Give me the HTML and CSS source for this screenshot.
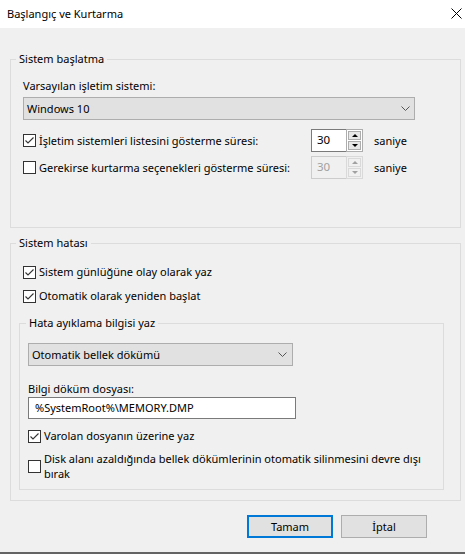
FILE: index.html
```html
<!DOCTYPE html>
<html lang="tr">
<head>
<meta charset="utf-8">
<title>Başlangıç ve Kurtarma</title>
<link rel="stylesheet" href="styles.css">
</head>
<body>
<div class="window">
  <div class="titlebar">
    <span class="title">Başlangıç ve Kurtarma</span>
    <svg class="close" width="11" height="11" viewBox="0 0 11 11"><path d="M0.5 0.5 L10.5 10.5 M10.5 0.5 L0.5 10.5" stroke="#000" stroke-width="1" fill="none"/></svg>
  </div>
  <div class="content">
    <fieldset class="group g1">
      <legend>Sistem başlatma</legend>
      <div class="label first">Varsayılan işletim sistemi:</div>
      <div class="select os"><span>Windows 10</span><svg class="chev" width="9" height="5" viewBox="0 0 9 5"><path d="M0.5 0.5 L4.5 4.5 L8.5 0.5" stroke="#555" stroke-width="1" fill="none"/></svg></div>
      <div class="spin-row r1">
        <div class="check grow"><span class="box"><svg width="11" height="11" viewBox="0 0 11 11"><path d="M1.5 5.5 L4 8 L9.5 2.5" stroke="#333" stroke-width="1.1" fill="none"/></svg></span><span>İşletim sistemleri listesini gösterme süresi:</span></div>
        <div class="spin">
          <div class="spin-field">30</div>
          <div class="spin-btns"><span class="spin-btn"><i class="tri up"></i></span><span class="spin-btn"><i class="tri down"></i></span></div>
        </div>
        <span class="unit">saniye</span>
      </div>
      <div class="spin-row r2">
        <div class="check grow"><span class="box"></span><span>Gerekirse kurtarma seçenekleri gösterme süresi:</span></div>
        <div class="spin disabled">
          <div class="spin-field">30</div>
          <div class="spin-btns"><span class="spin-btn"><i class="tri up"></i></span><span class="spin-btn"><i class="tri down"></i></span></div>
        </div>
        <span class="unit">saniye</span>
      </div>
    </fieldset>

    <fieldset class="group g2">
      <legend>Sistem hatası</legend>
      <div class="check c1"><span class="box"><svg width="11" height="11" viewBox="0 0 11 11"><path d="M1.5 5.5 L4 8 L9.5 2.5" stroke="#333" stroke-width="1.1" fill="none"/></svg></span><span>Sistem günlüğüne olay olarak yaz</span></div>
      <div class="check c2"><span class="box"><svg width="11" height="11" viewBox="0 0 11 11"><path d="M1.5 5.5 L4 8 L9.5 2.5" stroke="#333" stroke-width="1.1" fill="none"/></svg></span><span>Otomatik olarak yeniden başlat</span></div>

      <fieldset class="group inner">
        <legend>Hata ayıklama bilgisi yaz</legend>
        <div class="select dump"><span>Otomatik bellek dökümü</span><svg class="chev" width="9" height="5" viewBox="0 0 9 5"><path d="M0.5 0.5 L4.5 4.5 L8.5 0.5" stroke="#555" stroke-width="1" fill="none"/></svg></div>
        <div class="label file-label">Bilgi döküm dosyası:</div>
        <div class="textbox">%SystemRoot%\MEMORY.DMP</div>
        <div class="check c3"><span class="box"><svg width="11" height="11" viewBox="0 0 11 11"><path d="M1.5 5.5 L4 8 L9.5 2.5" stroke="#333" stroke-width="1.1" fill="none"/></svg></span><span>Varolan dosyanın üzerine yaz</span></div>
        <div class="check c4 multi"><span class="box"></span><span>Disk alanı azaldığında bellek dökümlerinin otomatik silinmesini devre dışı bırak</span></div>
      </fieldset>
    </fieldset>

    <div class="buttons">
      <button class="btn default">Tamam</button>
      <button class="btn">İptal</button>
    </div>
  </div>
</div>
</body>
</html>
```

FILE: styles.css
```css
html, body {
  margin: 0;
  padding: 0;
}
body {
  width: 465px;
  height: 554px;
  font-family: "Noto Sans", "Open Sans", sans-serif;
  font-size: 11px;
  color: #000;
  background: #f0f0f0;
  overflow: hidden;
}
.window {
  height: 554px;
  box-sizing: border-box;
  border-bottom: 2px solid #646464;
  display: flex;
  flex-direction: column;
}
.titlebar {
  height: 28px;
  flex: none;
  background: #fff;
  display: flex;
  align-items: center;
  justify-content: space-between;
  padding: 0 3px 0 7px;
}
.title {
  line-height: 16px;
  font-size: 11px;
}
.close {
  display: block;
  margin-top: -2px;
}
.content {
  flex: 1;
  padding: 23px 4px 0 10px;
}
.group {
  margin: 0;
  min-width: 0;
  border: 1px solid #dcdcdc;
  padding: 0 0 0 12px;
}
.group legend {
  padding: 0 3px;
  margin-left: -7px;
  line-height: 16px;
}
.g1 {
  padding-bottom: 48px;
}
.g2 {
  margin-top: 7px;
  padding-bottom: 10px;
}
.inner {
  margin-top: 11px;
  margin-left: -4px;
  width: 425px;
  box-sizing: border-box;
  padding: 0 0 8px 8px;
}
.inner legend {
  margin-left: -2px;
}
.label {
  line-height: 16px;
}
.label.first {
  margin-top: 11px;
}
.select {
  box-sizing: border-box;
  height: 23px;
  border: 1px solid #adadad;
  background: #e1e1e1;
  display: flex;
  align-items: center;
  justify-content: space-between;
  padding: 0 4px 0 3px;
}
.select.os {
  margin-top: 3px;
  width: 392px;
}
.select.dump {
  margin-top: 12px;
  width: 265px;
  padding-right: 5px;
}
.chev {
  display: block;
}
.check {
  display: flex;
  align-items: center;
  line-height: 16px;
  white-space: nowrap;
}
.box {
  flex: none;
  box-sizing: border-box;
  width: 13px;
  height: 13px;
  border: 1px solid #333;
  background: #fff;
  margin-right: 3px;
  display: flex;
  align-items: center;
  justify-content: center;
}
.box svg {
  display: block;
}
.spin-row {
  display: flex;
  align-items: center;
  height: 23px;
}
.spin-row.r1 {
  margin-top: 9px;
}
.spin-row.r2 {
  margin-top: 4px;
}
.grow {
  width: 288px;
  flex: none;
}
.spin {
  display: flex;
  height: 23px;
  width: 52px;
  box-sizing: border-box;
}
.spin-field {
  box-sizing: border-box;
  width: 35px;
  height: 23px;
  border: 1px solid #7a7a7a;
  border-right: none;
  background: #fff;
  padding-left: 5px;
  line-height: 20px;
  font-size: 11.5px;
}
.spin-btns {
  box-sizing: border-box;
  width: 17px;
  height: 23px;
  border: 1px solid #adadad;
  background: #fff;
  padding: 1px;
  display: flex;
  flex-direction: column;
  gap: 1px;
}
.spin-btn {
  flex: 1;
  box-sizing: border-box;
  border: 1px solid #adadad;
  background: #e8e8e8;
  display: flex;
  align-items: center;
  justify-content: center;
}
.tri {
  display: block;
  width: 0;
  height: 0;
  border-left: 3px solid transparent;
  border-right: 3px solid transparent;
}
.tri.up {
  border-bottom: 3px solid #000;
}
.tri.down {
  border-top: 3px solid #000;
}
.spin.disabled .spin-field {
  background: #f0f0f0;
  border-color: #cccccc;
  color: #a0a0a0;
}
.spin.disabled .spin-btns {
  border-color: #d9d9d9;
  background: #f0f0f0;
}
.spin.disabled .spin-btn {
  border-color: #d9d9d9;
  background: #f0f0f0;
}
.spin.disabled .tri.up {
  border-bottom-color: #a0a0a0;
}
.spin.disabled .tri.down {
  border-top-color: #a0a0a0;
}
.unit {
  margin-left: 11px;
}
.check.c1 {
  margin-top: 13px;
}
.check.c2 {
  margin-top: 8px;
}
.file-label {
  margin-top: 15px;
}
.textbox {
  box-sizing: border-box;
  width: 268px;
  height: 22px;
  border: 1px solid #7a7a7a;
  background: #fff;
  padding-left: 6px;
  line-height: 20px;
}
.check.c3 {
  margin-top: 9px;
}
.check.c4 {
  margin-top: 7px;
  line-height: 15px;
  width: 405px;
  white-space: normal;
}
.buttons {
  margin-top: 14px;
  display: flex;
  justify-content: flex-end;
  gap: 8px;
  padding-right: 34px;
}
.btn {
  box-sizing: border-box;
  width: 86px;
  height: 23px;
  margin: 0;
  padding: 0;
  font: inherit;
  color: #000;
  background: #e1e1e1;
  border: 1px solid #adadad;
  border-radius: 0;
}
.btn.default {
  border: 2px solid #0078d7;
}
```
